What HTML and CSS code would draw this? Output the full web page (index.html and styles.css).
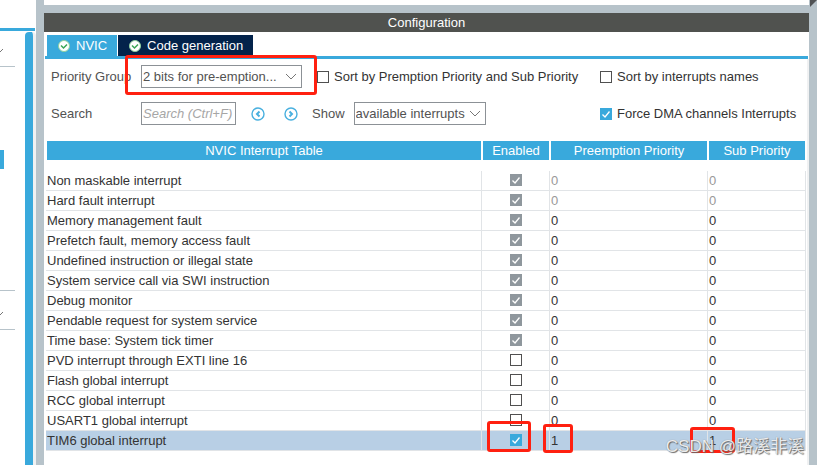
FILE: index.html
```html
<!DOCTYPE html>
<html lang="en">
<head>
<meta charset="utf-8">
<title>NVIC Configuration</title>
<link rel="stylesheet" href="styles.css">
</head>
<body>
<div class="app">
  <aside class="side">
    <div class="side-top"></div>
    <div class="side-body">
      <div class="side-list">
        <div class="side-group"><svg class="fold" viewBox="0 0 3 5"><path d="M0 4 L3 1"/></svg></div>
        <div class="side-items"><div class="side-current"></div></div>
        <div class="side-group side-group-low"><svg class="fold" viewBox="0 0 3 5"><path d="M0 4 L3 1"/></svg></div>
      </div>
      <div class="side-scroll"></div>
    </div>
  </aside>
  <div class="divider"></div>
  <main class="main">
    <div class="strip"></div>
    <h1 class="title">Configuration</h1>
    <section class="panel">
      <nav class="tabs">
        <button class="tab tab-on" type="button"><svg class="ok" viewBox="0 0 12 12"><circle cx="6" cy="6" r="5.5"/><path d="M3 5.5 L5.5 8 L9 4.5"/></svg>NVIC</button>
        <button class="tab" type="button"><svg class="ok" viewBox="0 0 12 12"><circle cx="6" cy="6" r="5.5"/><path d="M3 5.5 L5.5 8 L9 4.5"/></svg>Code generation</button>
      </nav>
      <div class="content">
        <div class="tools">
          <label for="group">Priority Group</label>
          <div class="tool-row">
            <div class="pick pick-group">
              <select id="group"><option>2 bits for pre-emption...</option></select>
              <svg class="chev" viewBox="0 0 12 7"><path d="M1 1 L6 6 L11 1"/></svg>
              <span class="mark mark-group"></span>
            </div>
            <label class="check"><input type="checkbox">Sort by Premption Priority and Sub Priority</label>
          </div>
          <label class="check"><input type="checkbox">Sort by interrupts names</label>
          <label for="search">Search</label>
          <div class="tool-row">
            <input class="search" id="search" type="text" placeholder="Search (Ctrl+F)">
            <div class="steps">
              <button class="step" type="button" aria-label="Previous"><svg viewBox="0 0 14 14"><circle cx="7" cy="7" r="6"/><path class="arrow" d="M8.5 4.5 L6 7 L8.5 9.5"/></svg></button>
              <button class="step" type="button" aria-label="Next"><svg viewBox="0 0 14 14"><circle cx="7" cy="7" r="6"/><path class="arrow" d="M5.5 4.5 L8 7 L5.5 9.5"/></svg></button>
            </div>
            <label class="show" for="show">Show</label>
            <div class="pick pick-show">
              <select id="show"><option>available interrupts</option></select>
              <svg class="chev" viewBox="0 0 12 7"><path d="M1 1 L6 6 L11 1"/></svg>
            </div>
          </div>
          <label class="check"><input type="checkbox" checked>Force DMA channels Interrupts</label>
        </div>
        <table class="irqs">
          <colgroup><col><col class="c-on"><col class="c-pre"><col class="c-sub"></colgroup>
          <thead><tr><th>NVIC Interrupt Table</th><th>Enabled</th><th>Preemption Priority</th><th>Sub Priority</th></tr></thead>
          <tbody>
            <tr class="gap"><td colspan="4"></td></tr>
            <tr class="fixed"><td>Non maskable interrupt</td><td><input type="checkbox" aria-label="Non maskable interrupt" checked disabled></td><td>0</td><td>0</td></tr>
            <tr class="fixed"><td>Hard fault interrupt</td><td><input type="checkbox" aria-label="Hard fault interrupt" checked disabled></td><td>0</td><td>0</td></tr>
            <tr><td>Memory management fault</td><td><input type="checkbox" aria-label="Memory management fault" checked disabled></td><td>0</td><td>0</td></tr>
            <tr><td>Prefetch fault, memory access fault</td><td><input type="checkbox" aria-label="Prefetch fault" checked disabled></td><td>0</td><td>0</td></tr>
            <tr><td>Undefined instruction or illegal state</td><td><input type="checkbox" aria-label="Undefined instruction" checked disabled></td><td>0</td><td>0</td></tr>
            <tr><td>System service call via SWI instruction</td><td><input type="checkbox" aria-label="System service call" checked disabled></td><td>0</td><td>0</td></tr>
            <tr><td>Debug monitor</td><td><input type="checkbox" aria-label="Debug monitor" checked disabled></td><td>0</td><td>0</td></tr>
            <tr><td>Pendable request for system service</td><td><input type="checkbox" aria-label="Pendable request" checked disabled></td><td>0</td><td>0</td></tr>
            <tr><td>Time base: System tick timer</td><td><input type="checkbox" aria-label="System tick timer" checked disabled></td><td>0</td><td>0</td></tr>
            <tr><td>PVD interrupt through EXTI line 16</td><td><input type="checkbox" aria-label="PVD interrupt"></td><td>0</td><td>0</td></tr>
            <tr><td>Flash global interrupt</td><td><input type="checkbox" aria-label="Flash global interrupt"></td><td>0</td><td>0</td></tr>
            <tr><td>RCC global interrupt</td><td><input type="checkbox" aria-label="RCC global interrupt"></td><td>0</td><td>0</td></tr>
            <tr><td>USART1 global interrupt</td><td><input type="checkbox" aria-label="USART1 global interrupt"></td><td>0</td><td>0</td></tr>
            <tr class="picked"><td>TIM6 global interrupt</td><td><input type="checkbox" aria-label="TIM6 global interrupt" checked><span class="mark mark-on"></span></td><td>1<span class="mark mark-pre"></span></td><td>1<span class="mark mark-sub"></span></td></tr>
          </tbody>
        </table>
      </div>
    </section>
  </main>
  <div class="divider"><svg class="corner" viewBox="0 0 8 8"><path d="M1 0 H8 L1 7 Z"/></svg></div>
  <div class="watermark">CSDN @路溪非溪</div>
</div>
</body>
</html>
```
FILE: styles.css
```css
:root {
  --blue: #39a9dc;
  --navy: #03234b;
  --steel: #b7c3ca;
  --line: #e1e4e7;
  --ink: #333333;
  --label: #525252;
  --edge: #8c9196;
  --red: #ff2010;
}
* { box-sizing: border-box; }
body {
  margin: 0;
  background: #fff;
  color: var(--ink);
  font: 13px/19px "Liberation Sans", "Noto Sans CJK SC", sans-serif;
}
button, input, select { font: inherit; color: inherit; margin: 0; }
svg { display: block; fill: none; }

.app {
  position: relative;
  display: grid;
  grid-template-columns: 36px 8px 1fr 8px;
  min-height: 100vh;
  padding-right: 3px;
  overflow: hidden;
}
.divider { background: var(--steel); }
.corner { width: 8px; height: 8px; }
.corner path { fill: #505254; }

.side { display: flex; flex-direction: column; }
.side-top { height: 31px; margin-right: 1px; border-bottom: 3px solid var(--blue); }
.side-body { flex: 1; display: flex; justify-content: space-between; }
.side-list { width: 15px; }
.side-group { height: 36px; padding-top: 17px; border-bottom: 1px solid var(--steel); }
.side-group-low { height: 39px; padding-top: 20px; }
.side-items { height: 224px; padding-top: 83px; border-bottom: 1px solid var(--steel); }
.fold { width: 3px; height: 5px; stroke: #777; }
.side-current { width: 4px; height: 19px; background: var(--blue); }
.side-scroll {
  width: 11px;
  margin-top: 1px;
  border-right: 3px solid #f0f1f2;
  background: var(--blue);
  background-clip: padding-box;
  border-radius: 4px 4px 0 0;
}

.main { display: flex; flex-direction: column; min-width: 0; }
.strip { height: 13px; border-bottom: 8px solid var(--steel); }
.title {
  margin: 0;
  background: #50524f;
  color: #fff;
  font-size: 13px;
  font-weight: 400;
  line-height: 19px;
  text-align: center;
}
.panel { flex: 1; display: flex; flex-direction: column; padding-top: 3px; }
.tabs {
  display: flex;
  gap: 1px;
  margin: 0 1px;
  padding-left: 2px;
  border-bottom: 3px solid var(--blue);
}
.tab {
  display: flex;
  align-items: center;
  gap: 6px;
  height: 21px;
  padding: 0 10px 0 11px;
  border: 0;
  background: var(--navy);
  color: #fff;
}
.tab-on { background: var(--blue); }
.ok { width: 12px; height: 12px; }
.ok circle { fill: #fff; stroke: #8fd19e; }
.ok path { stroke: #3aa655; stroke-width: 1.5; }

.content { flex: 1; padding: 6px 1px 0 2px; border-right: 2px solid #f0f1f2; }
.tools {
  display: grid;
  grid-template-columns: 90px 1fr 206px;
  gap: 14px 0;
  align-items: center;
  padding-left: 5px;
  color: var(--label);
  white-space: nowrap;
}
.tool-row { display: flex; align-items: center; height: 23px; }
.check { display: flex; align-items: center; gap: 5px; color: var(--ink); }

input[type="checkbox"] {
  appearance: none;
  flex: none;
  display: block;
  width: 12px;
  height: 12px;
  border: 1px solid #505050;
  background: #fff;
}
input[type="checkbox"]:checked {
  border: 0;
  background: var(--blue) url("data:image/svg+xml,%3Csvg xmlns='http://www.w3.org/2000/svg' viewBox='0 0 12 12'%3E%3Cpath d='M2.5 6.5 L5 9 L9.5 3.5' fill='none' stroke='white' stroke-width='1.3'/%3E%3C/svg%3E");
}
input[type="checkbox"]:disabled { background-color: #8f979d; }

.pick { position: relative; display: grid; align-items: center; }
.pick > * { grid-area: 1 / 1; }
.pick-group { width: 161px; margin-right: 15px; }
.pick-show { width: 132px; }
.pick select {
  appearance: none;
  width: 100%;
  height: 23px;
  padding: 0 1px;
  border: 1px solid var(--edge);
  border-radius: 0;
  background: #fff;
}
.chev { width: 12px; height: 7px; justify-self: end; margin-right: 5px; stroke: #777; pointer-events: none; }
.search {
  width: 95px;
  height: 23px;
  padding: 0 1px;
  border: 1px solid var(--edge);
  background: #fff;
}
.search::placeholder { color: #a6a6a6; font-style: italic; opacity: 1; }
.steps { display: flex; gap: 19px; margin: 0 14px 0 15px; }
.step { width: 14px; height: 14px; padding: 0; border: 0; background: none; }
.step svg { width: 14px; height: 14px; stroke: #49b0df; stroke-width: 1.4; }
.step .arrow { stroke-width: 2; }
.show { margin-right: 9px; }

.irqs {
  width: 100%;
  margin-top: 16px;
  table-layout: fixed;
  border-collapse: separate;
  border-spacing: 0;
}
.c-on { width: 68px; }
.c-pre { width: 158px; }
.c-sub { width: 98px; }
.irqs th {
  height: 19px;
  padding: 0;
  border: solid #fff;
  border-width: 0 1px;
  background: var(--blue);
  color: #fff;
  font-weight: 400;
}
.irqs td {
  position: relative;
  height: 20px;
  padding: 0 1px;
  border: solid var(--line);
  border-width: 0 1px 1px 0;
  white-space: nowrap;
}
.irqs td:nth-child(2) { padding-bottom: 1px; }
.irqs .gap td { height: 11px; border: 0; }
.irqs td input { margin: 0 auto; }
.fixed td:nth-child(n+3) { color: #999; }
.picked td { background: #b8cfe5; }

.mark {
  position: absolute;
  border: 3px solid var(--red);
  border-radius: 3px;
  pointer-events: none;
  z-index: 1;
}
.mark-group { inset: -10px -15px -7px -16px; }
.mark-on { inset: -10px 18px -2px 5px; }
.mark-pre { top: -7px; left: -7px; width: 30px; height: 29px; }
.mark-sub { top: -4px; left: -18px; width: 45px; height: 26px; }

.watermark {
  position: absolute;
  right: 16px;
  bottom: 6px;
  z-index: 2;
  color: rgba(255, 255, 255, 0.85);
  font-size: 17px;
  line-height: 24px;
  text-shadow: 1px 1px 1px #666, 0 0 1px #888;
}
```
